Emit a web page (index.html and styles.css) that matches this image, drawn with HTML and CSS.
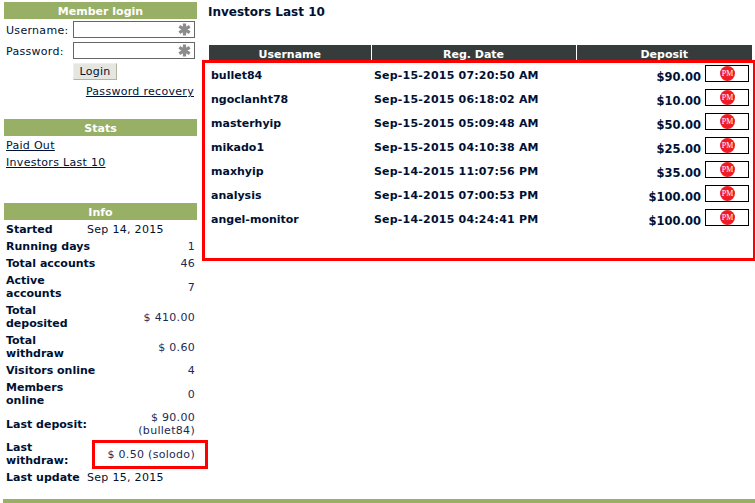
FILE: index.html
```html
<!DOCTYPE html>
<html lang="en">
<head>
<meta charset="utf-8">
<title>Investors Last 10</title>
<link rel="stylesheet" href="styles.css">
</head>
<body>
<div class="page">
  <aside class="sidebar">
    <h3 class="box-title">Member login</h3>
    <form class="login">
      <div class="field"><label>Username:</label><span class="input"><svg class="star" viewBox="0 0 12 12"><path d="M6 .5v11M1.2 3.2l9.6 5.6M10.8 3.2l-9.6 5.6"/></svg></span></div>
      <div class="field"><label>Password:</label><span class="input"><svg class="star" viewBox="0 0 12 12"><path d="M6 .5v11M1.2 3.2l9.6 5.6M10.8 3.2l-9.6 5.6"/></svg></span></div>
      <div class="submit"><span class="btn">Login</span></div>
      <div class="recovery"><a href="#">Password recovery</a></div>
    </form>
    <h3 class="box-title stats-title">Stats</h3>
    <div class="stats">
      <a href="#">Paid Out</a>
      <a href="#">Investors Last 10</a>
    </div>
    <h3 class="box-title info-title">Info</h3>
    <div class="info">
      <div class="row"><b class="fixed">Started</b><span>Sep 14, 2015</span></div>
      <div class="row"><b>Running days</b><span class="val">1</span></div>
      <div class="row"><b>Total accounts</b><span class="val">46</span></div>
      <div class="row"><b>Active<br>accounts</b><span class="val">7</span></div>
      <div class="row"><b>Total<br>deposited</b><span class="val">$ 410.00</span></div>
      <div class="row"><b>Total<br>withdraw</b><span class="val">$ 0.60</span></div>
      <div class="row"><b>Visitors online</b><span class="val">4</span></div>
      <div class="row"><b>Members<br>online</b><span class="val">0</span></div>
      <div class="row"><b>Last deposit:</b><span class="val">$ 90.00<br>(bullet84)</span></div>
      <div class="row"><b>Last<br>withdraw:</b><span class="val">$ 0.50 (solodo)</span></div>
      <div class="row"><b class="fixed">Last update</b><span>Sep 15, 2015</span></div>
    </div>
  </aside>
  <main class="main">
    <h2 class="title">Investors Last 10</h2>
    <table class="investors">
      <colgroup><col class="c1"><col class="c2"><col class="c3"><col class="c4"></colgroup>
      <thead>
        <tr><th>Username</th><th>Reg. Date</th><th colspan="2">Deposit</th></tr>
      </thead>
      <tbody>
        <tr><td>bullet84</td><td>Sep-15-2015 07:20:50 AM</td><td class="amt">$90.00</td><td class="pay"><span class="pm"><svg viewBox="0 0 16 16"><circle cx="8" cy="8" r="8"/><text x="8" y="11">PM</text></svg></span></td></tr>
        <tr><td>ngoclanht78</td><td>Sep-15-2015 06:18:02 AM</td><td class="amt">$10.00</td><td class="pay"><span class="pm"><svg viewBox="0 0 16 16"><circle cx="8" cy="8" r="8"/><text x="8" y="11">PM</text></svg></span></td></tr>
        <tr><td>masterhyip</td><td>Sep-15-2015 05:09:48 AM</td><td class="amt">$50.00</td><td class="pay"><span class="pm"><svg viewBox="0 0 16 16"><circle cx="8" cy="8" r="8"/><text x="8" y="11">PM</text></svg></span></td></tr>
        <tr><td>mikado1</td><td>Sep-15-2015 04:10:38 AM</td><td class="amt">$25.00</td><td class="pay"><span class="pm"><svg viewBox="0 0 16 16"><circle cx="8" cy="8" r="8"/><text x="8" y="11">PM</text></svg></span></td></tr>
        <tr><td>maxhyip</td><td>Sep-14-2015 11:07:56 PM</td><td class="amt">$35.00</td><td class="pay"><span class="pm"><svg viewBox="0 0 16 16"><circle cx="8" cy="8" r="8"/><text x="8" y="11">PM</text></svg></span></td></tr>
        <tr><td>analysis</td><td>Sep-14-2015 07:00:53 PM</td><td class="amt">$100.00</td><td class="pay"><span class="pm"><svg viewBox="0 0 16 16"><circle cx="8" cy="8" r="8"/><text x="8" y="11">PM</text></svg></span></td></tr>
        <tr><td>angel-monitor</td><td>Sep-14-2015 04:24:41 PM</td><td class="amt">$100.00</td><td class="pay"><span class="pm"><svg viewBox="0 0 16 16"><circle cx="8" cy="8" r="8"/><text x="8" y="11">PM</text></svg></span></td></tr>
      </tbody>
    </table>
  </main>
  <div class="mark mark-table"></div>
  <div class="mark mark-withdraw"></div>
</div>
<footer class="footer"></footer>
</body>
</html>
```
FILE: styles.css
```css
* { box-sizing: border-box; }
html, body { margin: 0; padding: 0; overflow: hidden; }
body {
  background: #fff;
  color: #001133;
  font: 11px/13px "DejaVu Sans", Verdana, sans-serif;
  letter-spacing: 0.3px;
}
b, .box-title, .title, .investors { letter-spacing: 0; }
a { color: #001133; text-decoration: underline; }

.page { position: relative; display: flex; height: 499px; padding-top: 2px; }

.sidebar { width: 193px; margin-left: 4px; flex: none; }
.box-title {
  margin: 0;
  height: 17px;
  background: #98b065;
  color: #fff;
  font-size: 11px;
  line-height: 19px;
  font-weight: bold;
  text-align: center;
}

.login { padding: 2px 2px 0 2px; }
.field { display: flex; align-items: center; justify-content: space-between; height: 17px; margin-bottom: 4px; }
.field label { color: #001133; padding-top: 1px; }
.input {
  display: flex;
  align-items: center;
  justify-content: flex-end;
  width: 122px;
  height: 17px;
  padding-right: 3px;
  border: 1px solid #666;
  background: #fff;
}
.star { width: 13px; height: 13px; }
.star path { stroke: #8c8c8c; stroke-width: 3; fill: none; }
.submit { padding-left: 67px; }
.btn {
  display: block;
  width: 44px;
  height: 17px;
  background: #e6e6e1;
  border: 1px solid;
  border-color: #f2f2da #b4b4a4 #b4b4a4 #f2f2da;
  text-align: center;
  line-height: 16px;
}
.recovery { margin-top: 5px; margin-right: 1px; text-align: right; }

.stats-title { margin-top: 21px; }
.stats { padding: 3px 2px 0; display: flex; flex-direction: column; gap: 4px; align-items: flex-start; }

.info-title { margin-top: 34px; }
.info { padding: 3px 2px 0; display: flex; flex-direction: column; gap: 4px; }
.row { display: flex; justify-content: space-between; align-items: center; color: #001133; }
.row b { white-space: nowrap; }
.row .fixed { width: 81px; flex: none; }
.row span { flex: 1; }
.row .val { flex: none; text-align: right; color: #1b2a55; }

.main { flex: 1; padding: 0 3px 0 11px; min-width: 0; }
.title { margin: 3px 0 0; font-size: 12px; line-height: 14px; font-weight: bold; }
.investors {
  width: 543px;
  margin: 26px 0 0 1px;
  border-collapse: collapse;
  table-layout: fixed;
  font-weight: bold;
}
.c1 { width: 162px; }
.c2 { width: 205px; }
.c3 { width: 129px; }
.c4 { width: 47px; }
.investors th {
  height: 18px;
  padding: 1px 0 0;
  background: #363c3c;
  color: #fff;
  font-size: 11px;
  line-height: 17px;
  border-left: 1px solid #fff;
}
.investors th:first-child { border-left: 0; }
.investors td { height: 24px; padding: 0 2px; vertical-align: middle; white-space: nowrap; }
.investors td:nth-child(2) { padding-left: 3px; letter-spacing: 0.2px; }
.investors td.amt { text-align: right; padding: 5px 4px 0 0; font-size: 11.5px; }
.investors td.pay { padding: 2px 3px 0 0; vertical-align: top; }
.pm {
  display: flex;
  justify-content: center;
  align-items: center;
  width: 44px;
  height: 17px;
  background: #fff;
  border: 1px solid #000;
}
.pm svg { width: 15px; height: 15px; display: block; }
.pm circle { fill: #ee1c25; }
.pm text { fill: #fff; font: 8.5px "Liberation Serif", serif; text-anchor: middle; }

.mark { position: absolute; border: 3px solid #f00; }
.mark-table { left: 202px; top: 60px; width: 553px; height: 201px; border-right-width: 2px; }
.mark-withdraw { left: 92px; top: 440px; width: 116px; height: 29px; }

.footer { height: 4px; margin-left: 3px; background: #98b065; }
```
